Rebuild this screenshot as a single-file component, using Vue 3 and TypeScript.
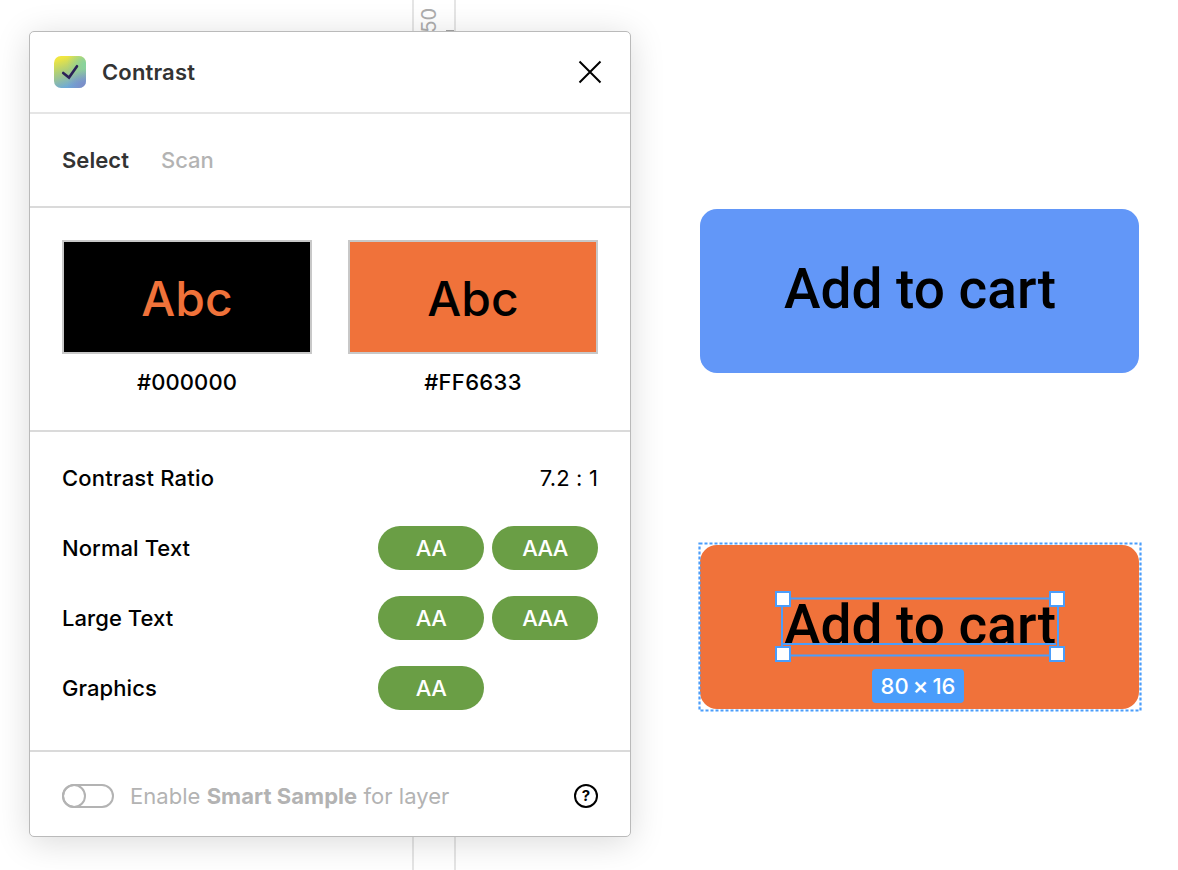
<script setup lang="ts">
interface Swatch {
  hex: string
  tone: string
}

interface Rating {
  label: string
  badges: string[]
}

const swatches: Swatch[] = [
  { hex: '#000000', tone: 'dark' },
  { hex: '#FF6633', tone: 'orange' },
]

const ratings: Rating[] = [
  { label: 'Normal Text', badges: ['AA', 'AAA'] },
  { label: 'Large Text', badges: ['AA', 'AAA'] },
  { label: 'Graphics', badges: ['AA'] },
]
</script>

<template>
  <main class="canvas">
    <div class="ruler"><span class="ruler-label">50</span><i class="ruler-mark"></i></div>

    <section class="panel">
      <header class="head">
        <svg class="logo" viewBox="0 0 32 32">
          <defs>
            <linearGradient id="base" x1="0" y1="0" x2="0.35" y2="1">
              <stop offset="0.12" stop-color="#f0e640" />
              <stop offset="0.5" stop-color="#afcf78" />
              <stop offset="1" stop-color="#6da9d8" />
            </linearGradient>
            <radialGradient id="mint" cx="1" cy="0.25" r="0.6">
              <stop offset="0" stop-color="#84d39f" />
              <stop offset="1" stop-color="#84d39f" stop-opacity="0" />
            </radialGradient>
            <radialGradient id="violet" cx="1" cy="1" r="0.6">
              <stop offset="0" stop-color="#8087c4" />
              <stop offset="1" stop-color="#8087c4" stop-opacity="0" />
            </radialGradient>
          </defs>
          <rect width="32" height="32" rx="7" fill="url(#base)" />
          <rect width="32" height="32" rx="7" fill="url(#mint)" />
          <rect width="32" height="32" rx="7" fill="url(#violet)" />
          <path d="M9.2 17 L15 21.6 L23 10.2" fill="none" stroke="#2b2157" stroke-width="2.6" stroke-linecap="round" stroke-linejoin="miter" />
        </svg>
        <h1 class="title">Contrast</h1>
        <svg class="close" viewBox="0 0 24 24">
          <path d="M1.5 1.5 L22.5 22.5 M22.5 1.5 L1.5 22.5" stroke="#000" stroke-width="2" />
        </svg>
      </header>

      <nav class="tabs">
        <span class="tab active">Select</span>
        <span class="tab">Scan</span>
      </nav>

      <div class="swatches">
        <div v-for="s in swatches" :key="s.hex" class="swatch">
          <div class="sample" :class="s.tone">Abc</div>
          <div class="hex" :class="s.tone">{{ s.hex }}</div>
        </div>
      </div>

      <div class="results">
        <div class="row">
          <span class="label ratio-label">Contrast Ratio</span>
          <span class="ratio">7.2 : 1</span>
        </div>
        <div v-for="r in ratings" :key="r.label" class="row">
          <span class="label">{{ r.label }}</span>
          <div class="badges">
            <span v-for="b in r.badges" :key="b" class="badge">{{ b }}</span>
          </div>
        </div>
      </div>

      <footer class="foot">
        <svg class="toggle" viewBox="0 0 52 24">
          <rect x="1" y="1" width="50" height="22" rx="11" fill="none" stroke="#b3b3b3" stroke-width="2" />
          <circle cx="12" cy="12" r="11" fill="none" stroke="#b3b3b3" stroke-width="2" />
        </svg>
        <span class="foot-text">Enable <b>Smart Sample</b> for layer</span>
        <span class="help">?</span>
      </footer>
    </section>

    <div class="cta blue"><span>Add to cart</span></div>
    <div class="cta orange"><span>Add to cart</span></div>

    <svg class="selection" viewBox="0 0 444 170">
      <g fill="none" stroke="#4a9dfb">
        <rect x="1.5" y="1.5" width="441" height="167" stroke-width="2.2" stroke-dasharray="3 2" />
        <path d="M84 102 H358" stroke-width="2" />
        <rect x="84" y="56.5" width="276" height="57" stroke-width="2" />
      </g>
      <g fill="#fff" stroke="#4a9dfb" stroke-width="2">
        <rect x="78" y="50" width="14" height="14" />
        <rect x="352" y="50" width="14" height="14" />
        <rect x="78" y="105" width="14" height="14" />
        <rect x="352" y="105" width="14" height="14" />
      </g>
    </svg>
    <div class="size">80 <span class="times">×</span> 16</div>
  </main>
</template>

<style>
body {
  margin: 0;
  background: #fff;
}
</style>

<style scoped>
.canvas {
  position: relative;
  width: 1178px;
  height: 870px;
  overflow: hidden;
  background: #fff;
  font-family: Inter, "Liberation Sans", sans-serif;
  font-size: 22px;
  color: #000;
}

.ruler {
  position: absolute;
  left: 412px;
  top: 0;
  width: 40px;
  height: 870px;
  border: solid #e5e5e5;
  border-width: 0 2px;
}

.ruler-label {
  position: absolute;
  left: 3px;
  top: 8px;
  font-size: 20px;
  line-height: 24px;
  color: #adadad;
  writing-mode: vertical-rl;
  transform: rotate(180deg);
}

.ruler-mark {
  position: absolute;
  right: 0;
  top: 30px;
  width: 8px;
  height: 2px;
  background: #a5a5a5;
}

.panel {
  position: absolute;
  left: 29px;
  top: 31px;
  width: 600px;
  height: 804px;
  border: 1px solid #bababa;
  border-radius: 5px;
  background: #fff;
  box-shadow: 0 5px 34px rgba(0, 0, 0, 0.15);
}

.head {
  display: flex;
  align-items: center;
  height: 80px;
  padding: 0 28px 0 24px;
  border-bottom: 2px solid #e5e5e5;
}

.logo {
  width: 32px;
  height: 32px;
}

.title {
  margin: 0 0 0 16px;
  font-size: 22px;
  font-weight: 600;
  color: #333;
  letter-spacing: 0.15px;
}

.close {
  width: 24px;
  height: 24px;
  margin-left: auto;
}

.tabs {
  display: flex;
  align-items: center;
  gap: 32px;
  height: 92px;
  padding: 0 32px;
  border-bottom: 2px solid #dadada;
}

.tab {
  font-weight: 500;
  color: #b3b3b3;
}

.tab.active {
  font-weight: 600;
  color: #333;
  letter-spacing: 0.05px;
}

.swatches {
  display: flex;
  justify-content: space-between;
  height: 190px;
  padding: 32px 32px 0;
  border-bottom: 2px solid #dadada;
}

.swatch {
  width: 250px;
}

.sample {
  box-sizing: border-box;
  height: 114px;
  border: 2px solid #c8c8c8;
  font-size: 48px;
  font-weight: 500;
  line-height: 113px;
  text-align: center;
}

.sample.dark {
  background: #000;
  color: #f0723a;
}

.sample.orange {
  background: #f0723a;
}

.hex {
  margin-top: 15px;
  font-weight: 500;
  line-height: 26px;
  text-align: center;
  letter-spacing: 0.11px;
}

.hex.orange {
  letter-spacing: 0.35px;
}

.results {
  height: 292px;
  padding: 11px 32px 15px;
  border-bottom: 2px solid #dadada;
}

.row {
  display: flex;
  align-items: center;
  height: 70px;
}

.label {
  width: 316px;
  font-weight: 500;
  letter-spacing: 0.07px;
}

.label.ratio-label {
  letter-spacing: 0.22px;
}

.ratio {
  margin-left: auto;
  letter-spacing: 0.15px;
}

.badges {
  display: flex;
  gap: 8px;
}

.badge {
  width: 106px;
  height: 44px;
  border-radius: 22px;
  background: #6a9e45;
  color: #fff;
  font-weight: 500;
  line-height: 44px;
  text-align: center;
  letter-spacing: -0.6px;
}

.foot {
  display: flex;
  align-items: center;
  height: 88px;
  padding: 0 32px;
}

.toggle {
  width: 52px;
  height: 24px;
}

.foot-text {
  margin-left: 16px;
  color: #b3b3b3;
  letter-spacing: 0.04px;
}

.foot-text b {
  font-weight: 700;
}

.help {
  box-sizing: border-box;
  width: 24px;
  height: 24px;
  margin-left: auto;
  border: 2px solid #000;
  border-radius: 50%;
  font-size: 15px;
  font-weight: 700;
  line-height: 20px;
  text-align: center;
}

.cta {
  position: absolute;
  box-sizing: border-box;
  left: 700px;
  width: 439px;
  height: 164px;
  padding-left: 1px;
  border-radius: 17px;
  font-family: Roboto, sans-serif;
  font-size: 55px;
  font-weight: 500;
  line-height: 160px;
  text-align: center;
}

.cta.blue {
  top: 209px;
  background: #6297f8;
}

.cta.orange {
  top: 545px;
  background: #f0723a;
}

.selection {
  position: absolute;
  left: 698px;
  top: 542px;
  width: 444px;
  height: 170px;
}

.size {
  position: absolute;
  left: 872px;
  top: 669px;
  width: 92px;
  height: 34px;
  border-radius: 4px;
  background: #4a9dfb;
  color: #fff;
  font-weight: 500;
  line-height: 34px;
  text-align: center;
  word-spacing: -2px;
  white-space: nowrap;
}

.times {
  font-size: 24px;
  line-height: 1;
}
</style>
